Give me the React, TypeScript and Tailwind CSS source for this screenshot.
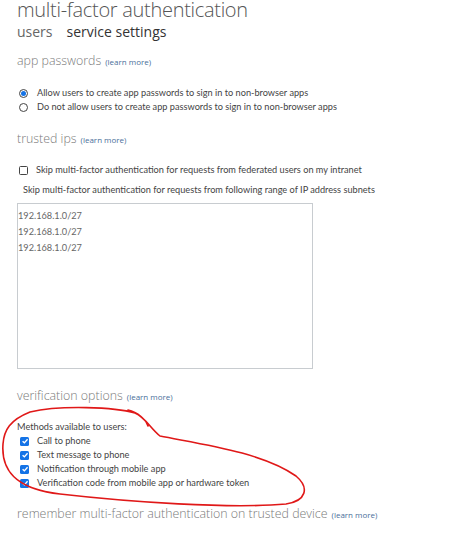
import React from "react";

const LEARN = "(learn more)";
const HEAD_FONT = { fontFamily: '"Open Sans", "Noto Sans", sans-serif' };

function Heading({ text, className = "" }: { text: string; className?: string }) {
  return (
    <div className={`flex items-baseline gap-[4px] text-[#7a7a7a] ${className}`} style={HEAD_FONT}>
      <span className="text-[12.4px] font-light leading-[20px]">{text}</span>
      <span className="text-[8px] leading-[10px] text-[#4a6f9a]">{LEARN}</span>
    </div>
  );
}

function Check({ checked }: { checked: boolean }) {
  if (!checked) {
    return <span className="inline-block h-[9px] w-[9px] shrink-0 rounded-[1.5px] border border-[#444]" />;
  }
  return (
    <span className="inline-flex h-[9px] w-[9px] shrink-0 items-center justify-center rounded-[1.5px] bg-[#1473e6]">
      <svg viewBox="0 0 10 10" className="h-[8px] w-[8px]">
        <path d="M2 5.2 L4.2 7.3 L8.2 2.8" fill="none" stroke="#fff" strokeWidth="1.7" />
      </svg>
    </span>
  );
}

function Radio({ checked }: { checked: boolean }) {
  return (
    <span className="inline-flex h-[9px] w-[9px] shrink-0 items-center justify-center rounded-full border border-[#444] bg-white">
      {checked && <span className="h-[5px] w-[5px] rounded-full bg-[#1473e6]" />}
    </span>
  );
}

const methods = [
  "Call to phone",
  "Text message to phone",
  "Notification through mobile app",
  "Verification code from mobile app or hardware token",
];

export default function App() {
  return (
    <div
      className="relative h-[539px] w-[474px] overflow-hidden bg-white pl-[17px] text-[#444]"
      style={{ fontFamily: 'Lato, "Open Sans", sans-serif' }}
    >
      <div className="-mt-[4px] text-[20px] font-light leading-[27px] tracking-[-0.3px] text-[#555]" style={HEAD_FONT}>
        multi-factor authentication
      </div>
      <div className="flex gap-[14px] text-[14px] leading-[18px]" style={HEAD_FONT}>
        <span className="text-[#666]">users</span>
        <span className="text-[#333]">service settings</span>
      </div>

      <Heading text="app passwords" className="mt-[10px]" />
      <div className="mt-[15px] flex flex-col text-[9.2px] leading-[14px]">
        <label className="flex items-center gap-[9px] pl-[2px]">
          <Radio checked />
          <span>Allow users to create app passwords to sign in to non-browser apps</span>
        </label>
        <label className="flex items-center gap-[9px] pl-[2px]">
          <Radio checked={false} />
          <span>Do not allow users to create app passwords to sign in to non-browser apps</span>
        </label>
      </div>

      <Heading text="trusted ips" className="mt-[15px]" />
      <div className="mt-[14px] flex flex-col text-[9.2px] leading-[14px]">
        <label className="flex items-center gap-[8px] pl-[2px]">
          <Check checked={false} />
          <span>Skip multi-factor authentication for requests from federated users on my intranet</span>
        </label>
        <div className="mt-[6px] pl-[6px]">
          Skip multi-factor authentication for requests from following range of IP address subnets
        </div>
      </div>
      <div className="mt-[6px] h-[166px] w-[296px] border border-[#c8ccd0] pt-[4px] text-[9.2px] leading-[16px] text-[#666]">
        <div>192.168.1.0/27</div>
        <div>192.168.1.0/27</div>
        <div>192.168.1.0/27</div>
      </div>

      <Heading text="verification options" className="mt-[17px]" />
      <div className="mt-[14px] text-[9.2px] leading-[14px]">Methods available to users:</div>
      <div className="flex flex-col text-[9.2px] leading-[14px]">
        {methods.map((m) => (
          <label key={m} className="flex items-center gap-[8px] pl-[3px]">
            <Check checked />
            <span>{m}</span>
          </label>
        ))}
      </div>

      <Heading text="remember multi-factor authentication on trusted device" className="mt-[14px]" />

      <svg
        className="pointer-events-none absolute left-0 top-0"
        width="474"
        height="539"
        viewBox="0 0 474 539"
      >
        <path
          d="M 30 412 C 60 405, 115 407, 135 413 C 146 418, 150 428, 160 436 C 200 444, 262 452, 296 476 C 310 488, 306 501, 286 504 C 230 509, 130 502, 60 494 C 15 489, 1 470, 3 444 C 4 430, 10 420, 30 412 M 128 410 C 138 412, 146 420, 148 426"
          fill="none"
          stroke="#e01818"
          strokeWidth="1.6"
          strokeLinecap="round"
        />
      </svg>
    </div>
  );
}
